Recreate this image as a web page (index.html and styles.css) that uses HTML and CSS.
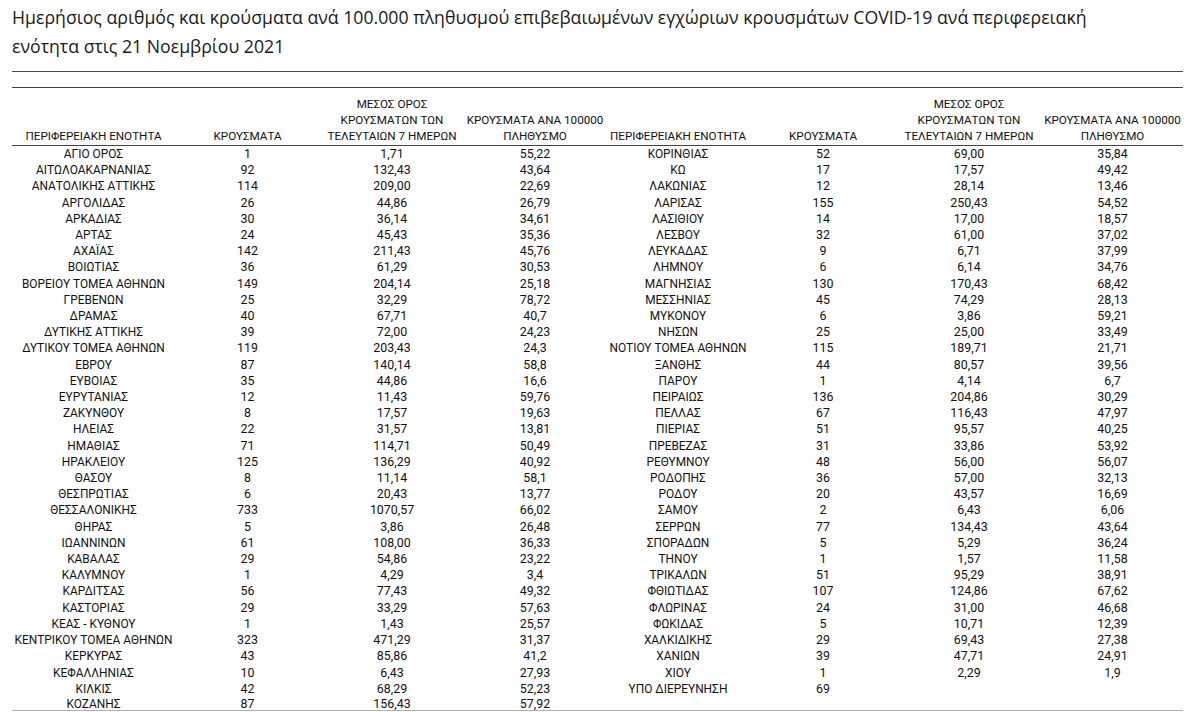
FILE: index.html
```html
<!DOCTYPE html>
<html lang="el">
<head>
<meta charset="utf-8">
<title>Κρούσματα COVID-19 ανά περιφερειακή ενότητα</title>
<link rel="stylesheet" href="styles.css">
</head>
<body>
<div class="page">
  <h1 class="title">Ημερήσιος αριθμός και κρούσματα ανά 100.000 πληθυσμού επιβεβαιωμένων εγχώριων κρουσμάτων COVID-19 ανά περιφερειακή<br>ενότητα στις 21 Νοεμβρίου 2021</h1>
  <div class="rule-thin"></div>
  <div class="rule-thick"></div>
  <table class="data">
    <colgroup>
      <col class="c1"><col class="c2"><col class="c3"><col class="c4">
      <col class="c5"><col class="c6"><col class="c7"><col class="c8">
    </colgroup>
    <thead>
      <tr>
        <th>ΠΕΡΙΦΕΡΕΙΑΚΗ ΕΝΟΤΗΤΑ</th>
        <th>ΚΡΟΥΣΜΑΤΑ</th>
        <th>ΜΕΣΟΣ ΟΡΟΣ<br>ΚΡΟΥΣΜΑΤΩΝ ΤΩΝ<br>ΤΕΛΕΥΤΑΙΩΝ 7 ΗΜΕΡΩΝ</th>
        <th>ΚΡΟΥΣΜΑΤΑ ΑΝΑ 100000<br>ΠΛΗΘΥΣΜΟ</th>
        <th>ΠΕΡΙΦΕΡΕΙΑΚΗ ΕΝΟΤΗΤΑ</th>
        <th>ΚΡΟΥΣΜΑΤΑ</th>
        <th>ΜΕΣΟΣ ΟΡΟΣ<br>ΚΡΟΥΣΜΑΤΩΝ ΤΩΝ<br>ΤΕΛΕΥΤΑΙΩΝ 7 ΗΜΕΡΩΝ</th>
        <th>ΚΡΟΥΣΜΑΤΑ ΑΝΑ 100000<br>ΠΛΗΘΥΣΜΟ</th>
      </tr>
    </thead>
    <tbody>
      <tr><td class="n">ΑΓΙΟ ΟΡΟΣ</td><td>1</td><td>1,71</td><td>55,22</td><td class="n">ΚΟΡΙΝΘΙΑΣ</td><td>52</td><td>69,00</td><td>35,84</td></tr>
      <tr><td class="n">ΑΙΤΩΛΟΑΚΑΡΝΑΝΙΑΣ</td><td>92</td><td>132,43</td><td>43,64</td><td class="n">ΚΩ</td><td>17</td><td>17,57</td><td>49,42</td></tr>
      <tr><td class="n">ΑΝΑΤΟΛΙΚΗΣ ΑΤΤΙΚΗΣ</td><td>114</td><td>209,00</td><td>22,69</td><td class="n">ΛΑΚΩΝΙΑΣ</td><td>12</td><td>28,14</td><td>13,46</td></tr>
      <tr><td class="n">ΑΡΓΟΛΙΔΑΣ</td><td>26</td><td>44,86</td><td>26,79</td><td class="n">ΛΑΡΙΣΑΣ</td><td>155</td><td>250,43</td><td>54,52</td></tr>
      <tr><td class="n">ΑΡΚΑΔΙΑΣ</td><td>30</td><td>36,14</td><td>34,61</td><td class="n">ΛΑΣΙΘΙΟΥ</td><td>14</td><td>17,00</td><td>18,57</td></tr>
      <tr><td class="n">ΑΡΤΑΣ</td><td>24</td><td>45,43</td><td>35,36</td><td class="n">ΛΕΣΒΟΥ</td><td>32</td><td>61,00</td><td>37,02</td></tr>
      <tr><td class="n">ΑΧΑΪΑΣ</td><td>142</td><td>211,43</td><td>45,76</td><td class="n">ΛΕΥΚΑΔΑΣ</td><td>9</td><td>6,71</td><td>37,99</td></tr>
      <tr><td class="n">ΒΟΙΩΤΙΑΣ</td><td>36</td><td>61,29</td><td>30,53</td><td class="n">ΛΗΜΝΟΥ</td><td>6</td><td>6,14</td><td>34,76</td></tr>
      <tr><td class="n">ΒΟΡΕΙΟΥ ΤΟΜΕΑ ΑΘΗΝΩΝ</td><td>149</td><td>204,14</td><td>25,18</td><td class="n">ΜΑΓΝΗΣΙΑΣ</td><td>130</td><td>170,43</td><td>68,42</td></tr>
      <tr><td class="n">ΓΡΕΒΕΝΩΝ</td><td>25</td><td>32,29</td><td>78,72</td><td class="n">ΜΕΣΣΗΝΙΑΣ</td><td>45</td><td>74,29</td><td>28,13</td></tr>
      <tr><td class="n">ΔΡΑΜΑΣ</td><td>40</td><td>67,71</td><td>40,7</td><td class="n">ΜΥΚΟΝΟΥ</td><td>6</td><td>3,86</td><td>59,21</td></tr>
      <tr><td class="n">ΔΥΤΙΚΗΣ ΑΤΤΙΚΗΣ</td><td>39</td><td>72,00</td><td>24,23</td><td class="n">ΝΗΣΩΝ</td><td>25</td><td>25,00</td><td>33,49</td></tr>
      <tr><td class="n">ΔΥΤΙΚΟΥ ΤΟΜΕΑ ΑΘΗΝΩΝ</td><td>119</td><td>203,43</td><td>24,3</td><td class="n">ΝΟΤΙΟΥ ΤΟΜΕΑ ΑΘΗΝΩΝ</td><td>115</td><td>189,71</td><td>21,71</td></tr>
      <tr><td class="n">ΕΒΡΟΥ</td><td>87</td><td>140,14</td><td>58,8</td><td class="n">ΞΑΝΘΗΣ</td><td>44</td><td>80,57</td><td>39,56</td></tr>
      <tr><td class="n">ΕΥΒΟΙΑΣ</td><td>35</td><td>44,86</td><td>16,6</td><td class="n">ΠΑΡΟΥ</td><td>1</td><td>4,14</td><td>6,7</td></tr>
      <tr><td class="n">ΕΥΡΥΤΑΝΙΑΣ</td><td>12</td><td>11,43</td><td>59,76</td><td class="n">ΠΕΙΡΑΙΩΣ</td><td>136</td><td>204,86</td><td>30,29</td></tr>
      <tr><td class="n">ΖΑΚΥΝΘΟΥ</td><td>8</td><td>17,57</td><td>19,63</td><td class="n">ΠΕΛΛΑΣ</td><td>67</td><td>116,43</td><td>47,97</td></tr>
      <tr><td class="n">ΗΛΕΙΑΣ</td><td>22</td><td>31,57</td><td>13,81</td><td class="n">ΠΙΕΡΙΑΣ</td><td>51</td><td>95,57</td><td>40,25</td></tr>
      <tr><td class="n">ΗΜΑΘΙΑΣ</td><td>71</td><td>114,71</td><td>50,49</td><td class="n">ΠΡΕΒΕΖΑΣ</td><td>31</td><td>33,86</td><td>53,92</td></tr>
      <tr><td class="n">ΗΡΑΚΛΕΙΟΥ</td><td>125</td><td>136,29</td><td>40,92</td><td class="n">ΡΕΘΥΜΝΟΥ</td><td>48</td><td>56,00</td><td>56,07</td></tr>
      <tr><td class="n">ΘΑΣΟΥ</td><td>8</td><td>11,14</td><td>58,1</td><td class="n">ΡΟΔΟΠΗΣ</td><td>36</td><td>57,00</td><td>32,13</td></tr>
      <tr><td class="n">ΘΕΣΠΡΩΤΙΑΣ</td><td>6</td><td>20,43</td><td>13,77</td><td class="n">ΡΟΔΟΥ</td><td>20</td><td>43,57</td><td>16,69</td></tr>
      <tr><td class="n">ΘΕΣΣΑΛΟΝΙΚΗΣ</td><td>733</td><td>1070,57</td><td>66,02</td><td class="n">ΣΑΜΟΥ</td><td>2</td><td>6,43</td><td>6,06</td></tr>
      <tr><td class="n">ΘΗΡΑΣ</td><td>5</td><td>3,86</td><td>26,48</td><td class="n">ΣΕΡΡΩΝ</td><td>77</td><td>134,43</td><td>43,64</td></tr>
      <tr><td class="n">ΙΩΑΝΝΙΝΩΝ</td><td>61</td><td>108,00</td><td>36,33</td><td class="n">ΣΠΟΡΑΔΩΝ</td><td>5</td><td>5,29</td><td>36,24</td></tr>
      <tr><td class="n">ΚΑΒΑΛΑΣ</td><td>29</td><td>54,86</td><td>23,22</td><td class="n">ΤΗΝΟΥ</td><td>1</td><td>1,57</td><td>11,58</td></tr>
      <tr><td class="n">ΚΑΛΥΜΝΟΥ</td><td>1</td><td>4,29</td><td>3,4</td><td class="n">ΤΡΙΚΑΛΩΝ</td><td>51</td><td>95,29</td><td>38,91</td></tr>
      <tr><td class="n">ΚΑΡΔΙΤΣΑΣ</td><td>56</td><td>77,43</td><td>49,32</td><td class="n">ΦΘΙΩΤΙΔΑΣ</td><td>107</td><td>124,86</td><td>67,62</td></tr>
      <tr><td class="n">ΚΑΣΤΟΡΙΑΣ</td><td>29</td><td>33,29</td><td>57,63</td><td class="n">ΦΛΩΡΙΝΑΣ</td><td>24</td><td>31,00</td><td>46,68</td></tr>
      <tr><td class="n">ΚΕΑΣ - ΚΥΘΝΟΥ</td><td>1</td><td>1,43</td><td>25,57</td><td class="n">ΦΩΚΙΔΑΣ</td><td>5</td><td>10,71</td><td>12,39</td></tr>
      <tr><td class="n">ΚΕΝΤΡΙΚΟΥ ΤΟΜΕΑ ΑΘΗΝΩΝ</td><td>323</td><td>471,29</td><td>31,37</td><td class="n">ΧΑΛΚΙΔΙΚΗΣ</td><td>29</td><td>69,43</td><td>27,38</td></tr>
      <tr><td class="n">ΚΕΡΚΥΡΑΣ</td><td>43</td><td>85,86</td><td>41,2</td><td class="n">ΧΑΝΙΩΝ</td><td>39</td><td>47,71</td><td>24,91</td></tr>
      <tr><td class="n">ΚΕΦΑΛΛΗΝΙΑΣ</td><td>10</td><td>6,43</td><td>27,93</td><td class="n">ΧΙΟΥ</td><td>1</td><td>2,29</td><td>1,9</td></tr>
      <tr><td class="n">ΚΙΛΚΙΣ</td><td>42</td><td>68,29</td><td>52,23</td><td class="n">ΥΠΟ ΔΙΕΡΕΥΝΗΣΗ</td><td>69</td><td></td><td></td></tr>
      <tr class="last"><td class="n">ΚΟΖΑΝΗΣ</td><td>87</td><td>156,43</td><td>57,92</td><td class="n"></td><td></td><td></td><td></td></tr>
    </tbody>
  </table>
</div>
</body>
</html>
```

FILE: styles.css
```css
html, body {
  margin: 0;
  padding: 0;
  background: #ffffff;
}

.page {
  padding: 3px 0 0 12px;
  width: 1171px;
  color: #111111;
}

.title {
  margin: 0;
  font-family: "Open Sans", "Noto Sans", sans-serif;
  font-weight: 400;
  font-size: 17.7px;
  line-height: 29px;
  color: #1a1a1a;
  white-space: nowrap;
}

.rule-thin {
  margin-top: 10px;
  border-top: 1px solid #4a4a4a;
}

.rule-thick {
  margin-top: 15px;
  border-top: 1.5px solid #404040;
}

.data {
  margin-top: 8px;
  border-collapse: collapse;
  table-layout: fixed;
  width: 1171px;
  font-family: Roboto, "Noto Sans", sans-serif;
  color: #111111;
}

.c1 { width: 163px; }
.c2 { width: 145px; }
.c3 { width: 144px; }
.c4 { width: 142px; }
.c5 { width: 144px; }
.c6 { width: 146px; }
.c7 { width: 146px; }
.c8 { width: 141px; }

.data th {
  font-weight: 400;
  font-size: 11.65px;
  line-height: 16px;
  padding: 0 0 1px 0;
  text-align: center;
  vertical-align: bottom;
  white-space: nowrap;
  border-bottom: 1.5px solid #444444;
}

.data td {
  padding: 0;
  height: 16.2px;
  line-height: 16.2px;
  text-align: center;
  vertical-align: middle;
  font-size: 12.4px;
  white-space: nowrap;
}

.data td.n {
  font-size: 11.9px;
}

.data tr.last td {
  height: 12px;
  line-height: 12px;
  padding-top: 1px;
  vertical-align: top;
  border-bottom: 1.5px solid #b0b0b0;
}
```
